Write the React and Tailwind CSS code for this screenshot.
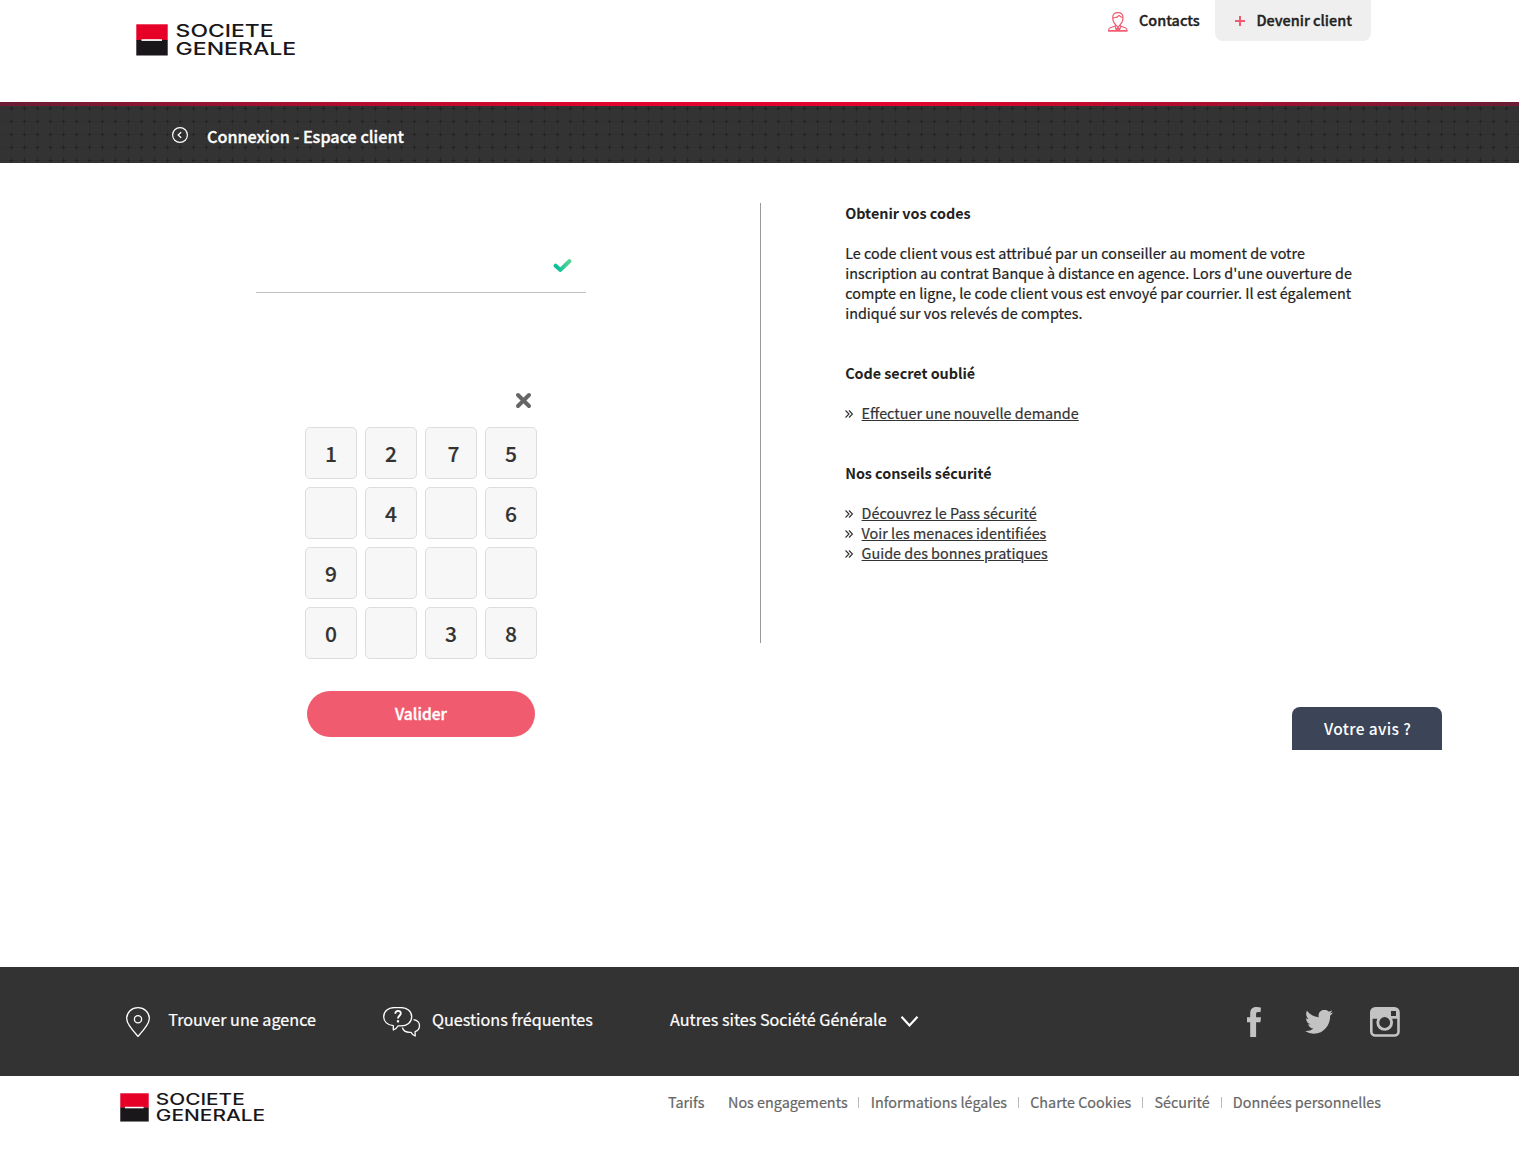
const FONT = "font-['Noto_Sans_CJK_SC','Noto_Sans',sans-serif]";

function Logo({ className }) {
  return (
    <svg className={className} viewBox="0 0 160 32" fill="none" overflow="visible">
      <rect x="0.300" y="0.300" width="31.400" height="16" fill="#e60028" />
      <rect x="0.300" y="16" width="31.400" height="15.500" fill="#1a171b" />
      <rect x="5.500" y="15.200" width="20.500" height="1.700" fill="#fff" />
      <g fontFamily="Inter, sans-serif" fontSize="17.200" fontWeight="500" fill="#1a171b">
        <text x="39.600" y="13.200" textLength="98" lengthAdjust="spacingAndGlyphs">SOCIETE</text>
        <text x="39.600" y="30.800" textLength="120.500" lengthAdjust="spacingAndGlyphs">GENERALE</text>
      </g>
    </svg>
  );
}

function ContactIcon() {
  return (
    <svg className="mt-3 h-5 w-5 shrink-0" viewBox="0 0 20 20" fill="none" stroke="#f05b6f" strokeWidth="1.1" strokeLinejoin="round">
      <path d="M7.200 12.200C5.600 10.800 4.700 8.400 4.700 5.600 4.700 2.400 6.800.6 9.900.6s5.100 1.800 5.100 5c0 2.800-.9 5.200-2.500 6.600" />
      <path d="M5 5.600c2.600.3 5-.6 6-2.200.8 1.100 2 1.900 3.900 2.200" />
      <path d="M7.300 11.800v2.200L2.300 15.800C1 16.300.6 17.300.6 18.700h18.400c0-1.400-.4-2.400-1.700-2.900l-5-1.800v-2.200" />
      <path d="M7.300 12.500l2.600 2.700 2.700-2.700M7 14.200l1 3.200 1.900-2.100 1.900 2.100 1-3.200M8.700 18.700l1.200-3.200 1.200 3.200" />
      <path d="M.2 18.900h19.200" strokeWidth="1.500" />
    </svg>
  );
}

function TitlePattern() {
  return (
    <svg className="absolute inset-0 h-full w-full" aria-hidden="true">
      <defs>
        <pattern id="crosses" width="13" height="13" x="5" y="9" patternUnits="userSpaceOnUse">
          <path d="M0 6.500h13M6.500 0v13" stroke="#313131" strokeWidth="1" />
          <path d="M4.500 6.500h4M6.500 4.500v4" stroke="#232323" strokeWidth="1" />
        </pattern>
      </defs>
      <rect width="100%" height="100%" fill="url(#crosses)" />
    </svg>
  );
}

const keys = ["1", "2", "7", "5", "", "4", "", "6", "9", "", "", "", "0", "", "3", "8"];

function Key({ value }) {
  return (
    <button className={`h-[52px] w-[52px] rounded-[5px] border border-[#dddddd] bg-[#f7f7f7] text-center text-[21px] leading-[50px] font-medium text-[#333] [-webkit-text-stroke:0.15px_#333] ${value === "7" ? "pl-[5px]" : ""}`}>
      {value}
    </button>
  );
}

function HelpLink({ children }) {
  return (
    <li className="flex h-5 items-center [-webkit-text-stroke:0.2px_#333]">
      <svg className="mt-[2px] mr-[8.400px] h-[8px] w-[8px]" viewBox="0 0 8 8" fill="none" stroke="#333" strokeWidth="1.2">
        <path d="M.500.500L4 4 .500 7.500M4 .500L7.500 4 4 7.500" />
      </svg>
      <a className="whitespace-nowrap text-[#333] underline decoration-1 underline-offset-[1px]">{children}</a>
    </li>
  );
}

function Help() {
  return (
    <aside className="box-content w-[540px] pl-[84.200px] text-[14.390px] leading-5 text-[#222]">
      <h2 className="mb-5 font-bold">Obtenir vos codes</h2>
      <p className="mb-10 whitespace-nowrap [-webkit-text-stroke:0.2px_#222]">
        Le code client vous est attribué par un conseiller au moment de votre<br />
        inscription au contrat Banque à distance en agence. Lors d'une ouverture de<br />
        compte en ligne, le code client vous est envoyé par courrier. Il est également<br />
        indiqué sur vos relevés de comptes.
      </p>
      <h2 className="mb-5 font-bold tracking-[-0.040px]">Code secret oublié</h2>
      <ul className="mb-10">
        <HelpLink>Effectuer une nouvelle demande</HelpLink>
      </ul>
      <h2 className="mb-5 font-bold tracking-[-0.040px]">Nos conseils sécurité</h2>
      <ul>
        <HelpLink>Découvrez le Pass sécurité</HelpLink>
        <HelpLink>Voir les menaces identifiées</HelpLink>
        <HelpLink>Guide des bonnes pratiques</HelpLink>
      </ul>
    </aside>
  );
}

function LoginForm() {
  return (
    <section className="flex w-[330px] flex-col items-center">
      <div className="flex h-[90px] w-full items-center justify-end border-b border-[#c0c0c0] pt-[36px] pr-[14px]">
        <svg className="h-[15px] w-[19px]" viewBox="0 0 19 15" fill="none">
          <defs>
            <linearGradient id="tick" x1="0" y1="0" x2="1" y2="0">
              <stop offset="0.200" stopColor="#0fc19a" />
              <stop offset="1" stopColor="#55d493" />
            </linearGradient>
          </defs>
          <path d="M2.600 7.700l4.800 4.200L16.400 3.200" stroke="url(#tick)" strokeWidth="4" strokeLinecap="round" strokeLinejoin="round" />
        </svg>
      </div>
      <div className="mt-[99px] flex w-[232px] justify-end pr-[5px]">
        <svg className="h-[17px] w-[17px]" viewBox="0 0 17 17" fill="none" stroke="#666" strokeWidth="4" strokeLinecap="round">
          <path d="M3 3l11 11M14 3L3 14" />
        </svg>
      </div>
      <div className="mt-[18px] grid w-[232px] grid-cols-4 gap-2">
        {keys.map((k, i) => <Key key={i} value={k} />)}
      </div>
      <button className="mt-8 h-[46px] w-[228px] rounded-full bg-[#f15b6f] pb-0.5 text-[15.600px] leading-[44px] font-medium text-white [-webkit-text-stroke:0.350px_#fff]">Valider</button>
    </section>
  );
}

function PinIcon() {
  return (
    <svg className="h-[31px] w-6" viewBox="0 0 24 31" fill="none" stroke="#fff" strokeWidth="1.300">
      <path d="M12 29.300C8 25 .7 17.600.7 11.600.7 5.300 5.800.7 12 .7s11.300 4.600 11.300 10.900c0 6-7.300 13.400-11.300 17.700z" />
      <circle cx="12" cy="12.300" r="3.600" />
    </svg>
  );
}

function FaqIcon() {
  return (
    <svg className="h-[31px] w-[38px]" viewBox="0 0 38 31" fill="none" stroke="#fff" strokeWidth="1.300" strokeLinejoin="round">
      <path d="M10.300 23v-4.300C4.600 18 .7 14.500.7 9.700.7 4 5.500.6 11.500.6h6.300c6 0 10.900 3.500 10.900 9.100 0 5.700-4.700 9.100-10.700 9.100h-2.800c-1 1.800-2.700 3.300-4.900 4.200z" />
      <path d="M30.500 12.700c3.500.5 6 2.900 6 6.100 0 2.900-1.700 4.900-4.400 5.900l.1 4.300c-2-.8-3.500-2.200-4.200-3.700-4.600.3-7.800-1.500-8.600-4.800" />
      <path d="M12.300 6.700c.2-3.800 5.600-3.600 5.500-.3-.1 2.400-2.800 2.300-2.800 5" strokeWidth="1.800" />
      <path d="M15 13.200v2.200" strokeWidth="2.200" />
    </svg>
  );
}

function Footer() {
  return (
    <footer>
      <div className="flex h-[109px] items-start bg-[#333] pl-[126px] text-[16.180px] leading-6 whitespace-nowrap text-white">
        <a className="flex w-[257px] pt-10 [-webkit-text-stroke:0.200px_#fff]">
          <PinIcon />
          <span className="ml-[18.300px]">Trouver une agence</span>
        </a>
        <a className="flex w-[287px] pt-10 [-webkit-text-stroke:0.200px_#fff]">
          <FaqIcon />
          <span className="ml-[11px]">Questions fréquentes</span>
        </a>
        <a className="flex w-[577px] pt-10 [-webkit-text-stroke:0.200px_#fff]">
          Autres sites Société Générale
          <svg className="mt-[9px] ml-[13.500px] h-[11px] w-[19px]" viewBox="0 0 19 11" fill="none" stroke="#fff" strokeWidth="2.200">
            <path d="M1.500.8l8 8.600 8-8.600" />
          </svg>
        </a>
        <div className="flex items-center pt-10 text-[#c3c3c3]">
          <svg className="h-[30px] w-[14px]" viewBox="0 0 14 30" fill="currentColor">
            <path d="M3.200 30V15.300H0v-5h3.200V6.500C3.200 2.300 5.200 0 9.200 0c1.800 0 3.600.3 4.800.6l-.5 4.700c-.9-.2-1.600-.3-2.400-.3-1.700 0-2 .8-2 2.300v3H14l-.6 5H9.100V30z" />
          </svg>
          <svg className="ml-[44px] h-[24px] w-[28px]" viewBox="0 2.500 24 19.500" preserveAspectRatio="none" fill="currentColor">
            <path d="M23.950 4.570a10 10 0 0 1-2.820.780 4.960 4.960 0 0 0 2.160-2.720c-.950.550-2 .950-3.130 1.180a4.920 4.920 0 0 0-8.380 4.480C7.690 8.100 4.070 6.130 1.640 3.160a4.820 4.820 0 0 0-.670 2.480c0 1.710.870 3.210 2.190 4.100a4.900 4.900 0 0 1-2.230-.620v.060a4.920 4.920 0 0 0 3.950 4.830 5 5 0 0 1-2.210.080 4.940 4.940 0 0 0 4.600 3.420A9.870 9.870 0 0 1 0 19.540a14 14 0 0 0 7.550 2.210c9.050 0 14-7.500 14-13.980 0-.210 0-.420-.020-.630a9.940 9.940 0 0 0 2.460-2.550z" />
          </svg>
          <svg className="ml-[37px] h-[30px] w-[30px]" viewBox="0 0 30 30" fill="none">
            <rect x="1.300" y="1.300" width="27.200" height="27.200" rx="4" stroke="currentColor" strokeWidth="2.600" />
            <path d="M1 11.800V5a4 4 0 0 1 4-4h19.800a4 4 0 0 1 4 4v6.800z" fill="currentColor" />
            <circle cx="14.700" cy="15.500" r="6.900" fill="#333" stroke="currentColor" strokeWidth="2.900" />
            <rect x="21" y="4" width="5" height="5" fill="#333" />
          </svg>
        </div>
      </div>
      <div className="flex h-[85px] items-start pt-4 pl-[120px]">
        <Logo className="mt-px h-[29px] w-[145px]" />
        <nav className="ml-[403px] flex items-center text-[14.380px] leading-5 whitespace-nowrap text-[#666] [-webkit-text-stroke:0.200px_#666]">
          <a className="w-[60px]">Tarifs</a>
          <a>Nos engagements</a>
          {["Informations légales", "Charte Cookies", "Sécurité", "Données personnelles"].map((label) => (
            <div key={label} className="flex items-center">
              <span className="mr-[11.300px] ml-[10.800px] h-[11px] w-px bg-[#bbb]" />
              <a>{label}</a>
            </div>
          ))}
        </nav>
      </div>
    </footer>
  );
}

export default function App() {
  return (
    <div className={`relative min-h-[1161px] w-[1519px] overflow-hidden bg-white ${FONT}`}>
      <header className="flex h-[102px] items-start pl-[136px] text-[14.450px] leading-5 font-medium whitespace-nowrap text-[#222] [-webkit-text-stroke:0.350px_#222]">
        <Logo className="mt-6 h-8 w-40 [-webkit-text-stroke:0]" />
        <a className="ml-[811.500px] flex w-[107.500px]">
          <ContactIcon />
          <span className="mt-2.5 ml-[11.500px]">Contacts</span>
        </a>
        <a className="flex h-[41.400px] w-[156px] rounded-b-lg bg-[#efefef] pt-2.5 pl-5">
          <svg className="mt-[6px] mr-[11.500px] h-[10px] w-[10px]" viewBox="0 0 10 10" stroke="#f05b6f" strokeWidth="2">
            <path d="M5 0v10M0 5h10" />
          </svg>
          Devenir client
        </a>
      </header>
      <div className="h-1 bg-[linear-gradient(90deg,#691d34_0%,#a01030_17%,#e2042c_40%,#e2042c_60%,#a01030_83%,#691d34_100%)]" />
      <div className="relative h-[57px] bg-[#333]">
        <TitlePattern />
        <div className="relative flex pt-[18px] pl-[172px] text-[16.190px] leading-6 font-medium text-white">
          <svg className="mt-[3px] mr-[19px] h-4 w-4" viewBox="0 0 16 16" fill="none" stroke="#fff">
            <circle cx="8" cy="8" r="7.400" strokeWidth="1.200" />
            <path d="M9.200 5.200L6.200 8l3 2.800" strokeWidth="1.300" />
          </svg>
          <h1 className="[-webkit-text-stroke:0.350px_#fff]">Connexion - Espace client</h1>
        </div>
      </div>
      <main className="flex h-[804px] items-start pt-10 pl-64">
        <LoginForm />
        <div className="ml-[174px] h-[440px] w-px bg-[#999]" />
        <Help />
      </main>
      <Footer />
      <button className="absolute top-[707px] left-[1292px] h-[43px] w-[150px] rounded-t-lg bg-[#3c4458] pl-px text-[15.500px] leading-[43px] font-medium tracking-[0.350px] text-white">
        Votre avis ?
      </button>
    </div>
  );
}
